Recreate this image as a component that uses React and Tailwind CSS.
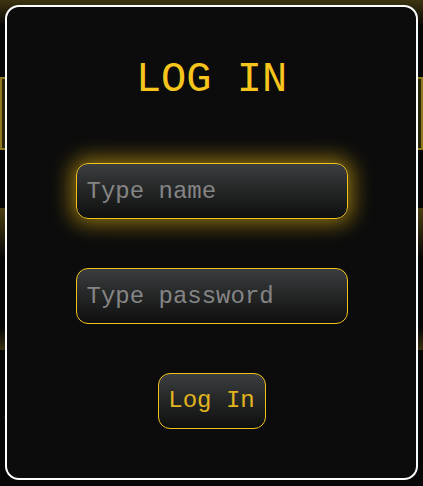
import React from "react";

const mono = "font-['Courier_New','Nimbus_Mono_PS','FreeMono',Courier,'Liberation_Mono',monospace]";

const Field = ({ placeholder, type = "text", glow }) => (
  <input
    type={type}
    placeholder={placeholder}
    className={`${mono} w-[272px] h-[56px] rounded-[12px] border border-[#f2c21b] bg-linear-to-b from-[#3b3e3f] to-[#0f0f0f] px-[10px] text-[24px] text-[#d8d8d8] placeholder:text-[#858585] outline-none ${
      glow ? "shadow-[0_0_20px_5px_rgba(240,190,20,0.55)]" : ""
    }`}
  />
);

const App = () => {
  return (
    <div className="relative h-[486px] w-full overflow-hidden bg-[#070707]">
      {/* page behind the dialog */}
      <div className="flex flex-col">
        <div className="h-[26px] bg-linear-to-b from-[#3d3411] to-transparent" />
        <div className="mt-[51px] h-[73px] border-2 border-[#8f7a1f] bg-[#2a2408]" />
        <div className="mt-[58px] h-[50px] bg-linear-to-b from-[#4b3f12] to-transparent" />
        <div className="mt-[70px] h-[22px] bg-linear-to-t from-[#3a3110] to-transparent" />
        <p className={`${mono} mt-[58px] text-[40px] leading-none text-[#a88c1c]`}>
          r
        </p>
      </div>

      {/* dialog */}
      <div className="absolute inset-0 flex justify-center pt-[5px]">
        <div className="flex h-[475px] w-[413px] flex-col items-center rounded-[14px] border-2 border-white bg-[#0c0c0c] pt-[52px]">
          <h1 className={`${mono} text-[42px] leading-none text-[#f7c51c]`}>
            LOG IN
          </h1>
          <div className="mt-[62px]">
            <Field placeholder="Type name" glow />
          </div>
          <div className="mt-[49px]">
            <Field placeholder="Type password" type="password" />
          </div>
          <button
            className={`${mono} mt-[49px] h-[56px] w-[108px] rounded-[12px] border border-[#f2c21b] bg-linear-to-b from-[#3b3e3f] to-[#0f0f0f] text-[24px] text-[#e2b51e]`}
          >
            Log In
          </button>
        </div>
      </div>
    </div>
  );
};

export default App;
